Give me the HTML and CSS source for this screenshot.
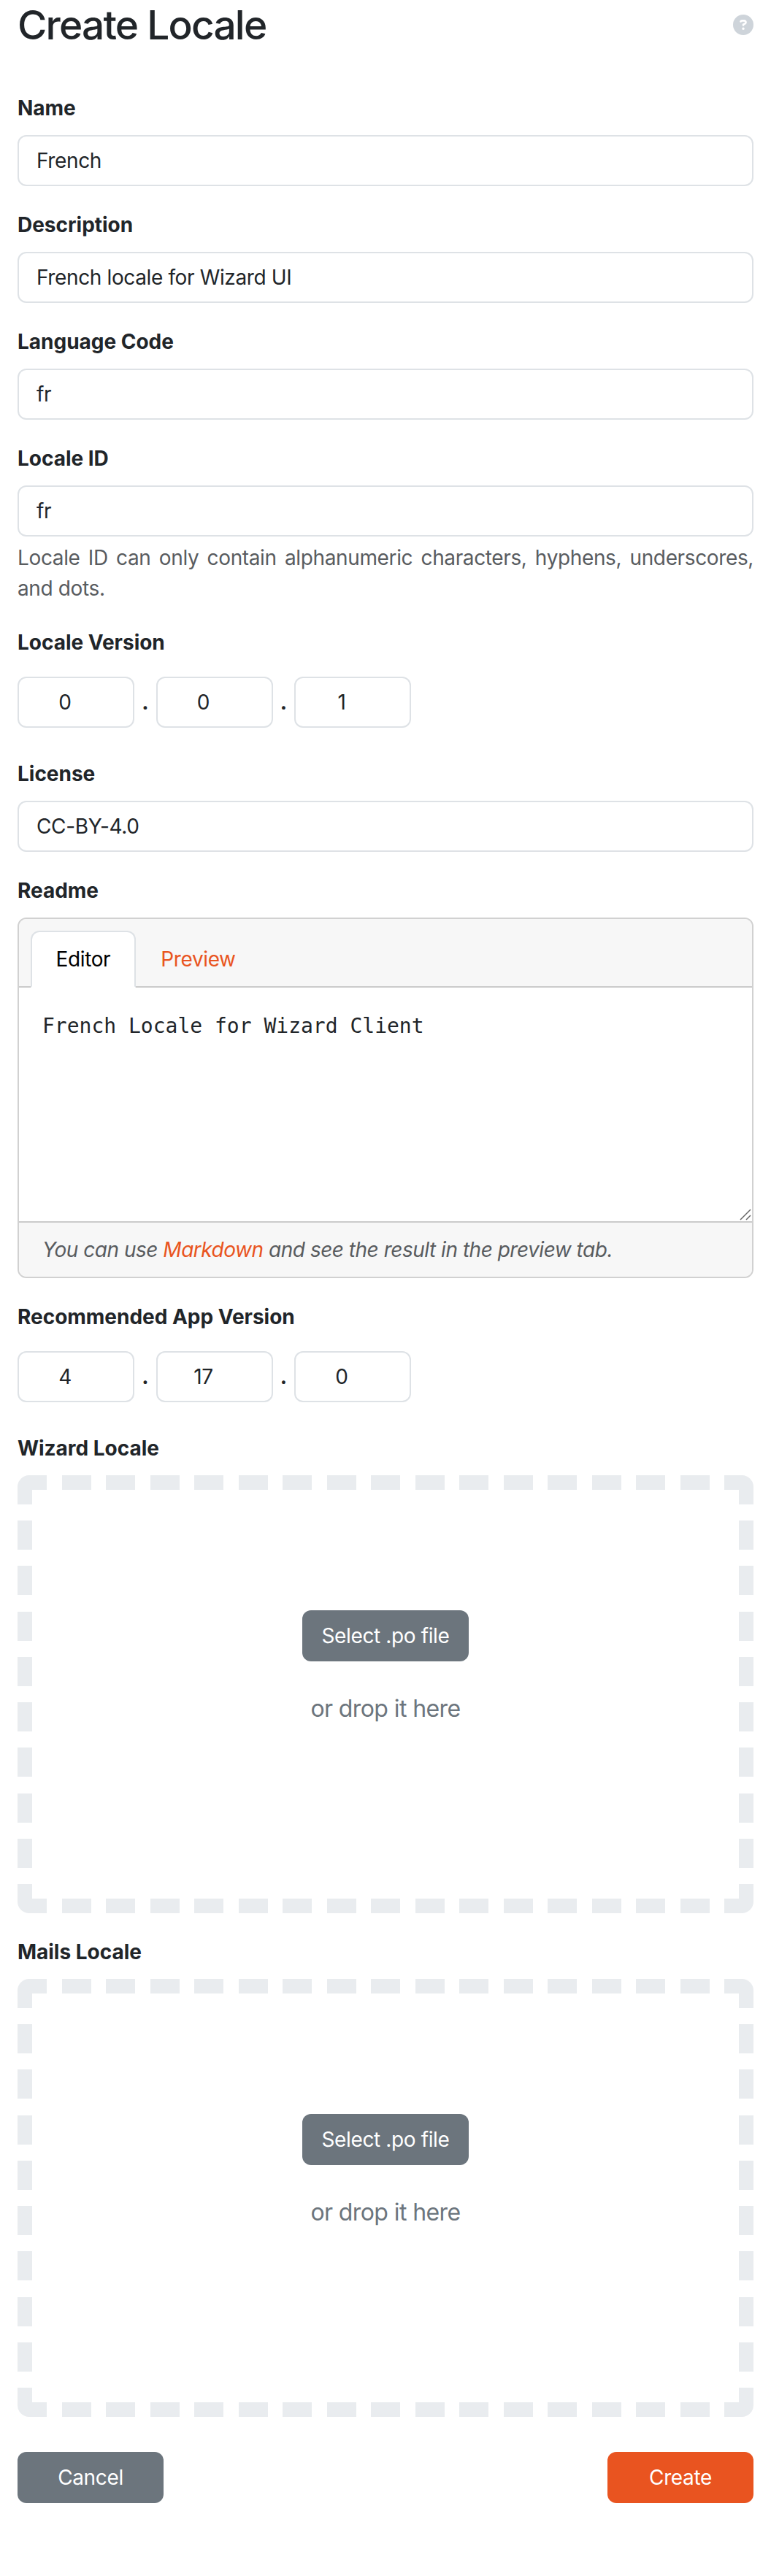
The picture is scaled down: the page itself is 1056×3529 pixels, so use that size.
FILE: index.html
```html
<!DOCTYPE html>
<html lang="en">
<head>
<meta charset="utf-8">
<title>Create Locale</title>
<link rel="stylesheet" href="styles.css">
</head>
<body>
<main class="page">
  <header class="page-header">
    <h1 class="title">Create Locale</h1>
    <svg class="help-icon" viewBox="0 0 512 512" role="img" aria-label="Help"><path fill="currentColor" d="M256 512A256 256 0 1 0 256 0a256 256 0 1 0 0 512zM169.8 165.3c7.9-22.3 29.1-37.3 52.8-37.3h58.3c34.9 0 63.1 28.3 63.1 63.1c0 22.6-12.1 43.5-31.7 54.8L280 264.4c-.2 13-10.9 23.6-24 23.6c-13.3 0-24-10.7-24-24V250.5c0-8.6 4.6-16.5 12.1-20.8l44.3-25.4c4.7-2.7 7.6-7.7 7.6-13.1c0-8.4-6.8-15.1-15.1-15.1H222.6c-3.4 0-6.4 2.1-7.5 5.3l-.4 1.2c-4.4 12.5-18.2 19-30.6 14.6s-19-18.2-14.6-30.6l.4-1.2zM224 352a32 32 0 1 1 64 0 32 32 0 1 1 -64 0z"/></svg>
  </header>
  <form class="form">
    <div class="group">
      <label class="label" for="name">Name</label>
      <input class="input" id="name" type="text" value="French">
    </div>
    <div class="group">
      <label class="label" for="description">Description</label>
      <input class="input" id="description" type="text" value="French locale for Wizard UI">
    </div>
    <div class="group">
      <label class="label" for="code">Language Code</label>
      <input class="input" id="code" type="text" value="fr">
    </div>
    <div class="group">
      <label class="label" for="locale-id">Locale ID</label>
      <input class="input" id="locale-id" type="text" value="fr">
      <p class="hint">Locale ID can only contain alphanumeric characters, hyphens, underscores, and dots.</p>
    </div>
    <div class="group group-version">
      <span class="label">Locale Version</span>
      <div class="version">
        <input class="input number" type="text" value="0"><span class="dot">.</span>
        <input class="input number" type="text" value="0"><span class="dot">.</span>
        <input class="input number" type="text" value="1">
      </div>
    </div>
    <div class="group">
      <label class="label" for="license">License</label>
      <input class="input" id="license" type="text" value="CC-BY-4.0">
    </div>
    <div class="group">
      <label class="label" for="readme">Readme</label>
      <div class="card">
        <div class="card-header">
          <span class="tab tab-active">Editor</span>
          <span class="tab">Preview</span>
        </div>
        <div class="editor">
          <textarea class="textarea" id="readme">French Locale for Wizard Client</textarea>
          <svg class="grip" viewBox="0 0 16 16" aria-hidden="true"><path d="M1 15 15 1M9 15l6-6" fill="none" stroke="#666" stroke-width="1.5"/></svg>
        </div>
        <div class="card-footer">You can use <a class="link">Markdown</a> and see the result in the preview tab.</div>
      </div>
    </div>
    <div class="group group-version">
      <span class="label">Recommended App Version</span>
      <div class="version">
        <input class="input number" type="text" value="4"><span class="dot">.</span>
        <input class="input number" type="text" value="17"><span class="dot">.</span>
        <input class="input number" type="text" value="0">
      </div>
    </div>
    <div class="group">
      <span class="label">Wizard Locale</span>
      <div class="dropzone">
        <button class="button button-select" type="button">Select .po file</button>
        <p class="drop-text">or drop it here</p>
      </div>
    </div>
    <div class="group">
      <span class="label">Mails Locale</span>
      <div class="dropzone">
        <button class="button button-select" type="button">Select .po file</button>
        <p class="drop-text">or drop it here</p>
      </div>
    </div>
    <div class="actions">
      <button class="button button-wide" type="button">Cancel</button>
      <button class="button button-wide button-primary" type="button">Create</button>
    </div>
  </form>
</main>
</body>
</html>
```
FILE: styles.css
```css
* {
  box-sizing: border-box;
}

body {
  margin: 0;
  background: #fff;
  color: #212529;
  font: 400 28px/42px Inter, "Liberation Sans", sans-serif;
  letter-spacing: -0.37px;
}

.page {
  min-height: 3529px;
  padding: 0 24px;
}

.page-header {
  display: flex;
  align-items: center;
  justify-content: space-between;
  height: 67px;
  margin-bottom: 60px;
}

.title {
  margin: 0;
  padding-top: 2px;
  font-size: 55px;
  font-weight: 500;
  letter-spacing: -1.8px;
  line-height: 67px;
}

.help-icon {
  width: 28px;
  height: 28px;
  color: #ced4da;
}

.form,
.group {
  display: flex;
  flex-direction: column;
}

.form {
  gap: 32px;
}

.group {
  gap: 16px;
}

.group-version {
  gap: 26px;
  padding-bottom: 10px;
}

.label {
  font-weight: 700;
  letter-spacing: -0.02px;
}

.input {
  width: 100%;
  height: 70px;
  padding: 12px 24px;
  border: 2px solid #dee2e6;
  border-radius: 12px;
  outline: 0;
  background: #fff;
  color: inherit;
  font: inherit;
  letter-spacing: inherit;
}

.hint {
  margin: -8px 0 0;
  color: #595c5f;
  text-align: justify;
}

.version {
  display: flex;
}

.number {
  width: 160px;
  padding-right: 54px;
  text-align: center;
}

.dot {
  width: 29.5px;
  padding-top: 14px;
  font-weight: 700;
  text-align: center;
}

.card {
  overflow: hidden;
  border: 2px solid #d1d1d1;
  border-radius: 12px;
}

.card-header {
  display: flex;
  padding: 16px 16px 0;
  background: #f7f7f7;
  box-shadow: inset 0 -2px #cbcbcb;
}

.tab {
  padding: 16px 32.5px;
  border: 2px solid transparent;
  border-radius: 12px 12px 0 0;
  color: #e95420;
}

.tab-active {
  border-color: #dee2e6;
  border-bottom-color: #fff;
  background: #fff;
  color: #000;
}

.editor {
  position: relative;
  height: 320px;
}

.textarea {
  display: block;
  width: 100%;
  height: 100%;
  padding: 32px;
  border: 0;
  outline: 0;
  resize: none;
  background: #fff;
  color: inherit;
  font: 28px/42px "DejaVu Sans Mono", monospace;
}

.grip {
  position: absolute;
  right: 1px;
  bottom: 1px;
  width: 16px;
  height: 16px;
}

.card-footer {
  padding: 16px 32px;
  border-top: 2px solid #cbcbcb;
  background: #f7f7f7;
  color: #595c5f;
  font-style: italic;
  letter-spacing: -0.48px;
}

.link {
  color: #e95420;
}

.dropzone {
  display: flex;
  flex-direction: column;
  align-items: center;
  height: 600px;
  padding-top: 185px;
  border-radius: 16px;
  background:
    repeating-linear-gradient(90deg, #e9ecef 0 40px, transparent 40px 60.5px) top / 100% 20px no-repeat,
    repeating-linear-gradient(90deg, #e9ecef 0 40px, transparent 40px 60.5px) bottom / 100% 20px no-repeat,
    repeating-linear-gradient(#e9ecef 0 40px, transparent 40px 62.222px) left / 20px 100% no-repeat,
    repeating-linear-gradient(#e9ecef 0 40px, transparent 40px 62.222px) right / 20px 100% no-repeat;
}

.button {
  height: 70px;
  padding: 12px 0;
  border: 0;
  border-radius: 12px;
  background: #6c757d;
  color: #fff;
  font: inherit;
  letter-spacing: inherit;
}

.button-select {
  width: 228px;
}

.button-wide {
  width: 200px;
}

.button-primary {
  background: #e95420;
}

.drop-text {
  margin: 42px 0 0;
  color: #6c757d;
  font-size: 32px;
  letter-spacing: -0.6px;
  line-height: 46px;
}

.actions {
  display: flex;
  justify-content: space-between;
  margin-top: 16px;
}
```
